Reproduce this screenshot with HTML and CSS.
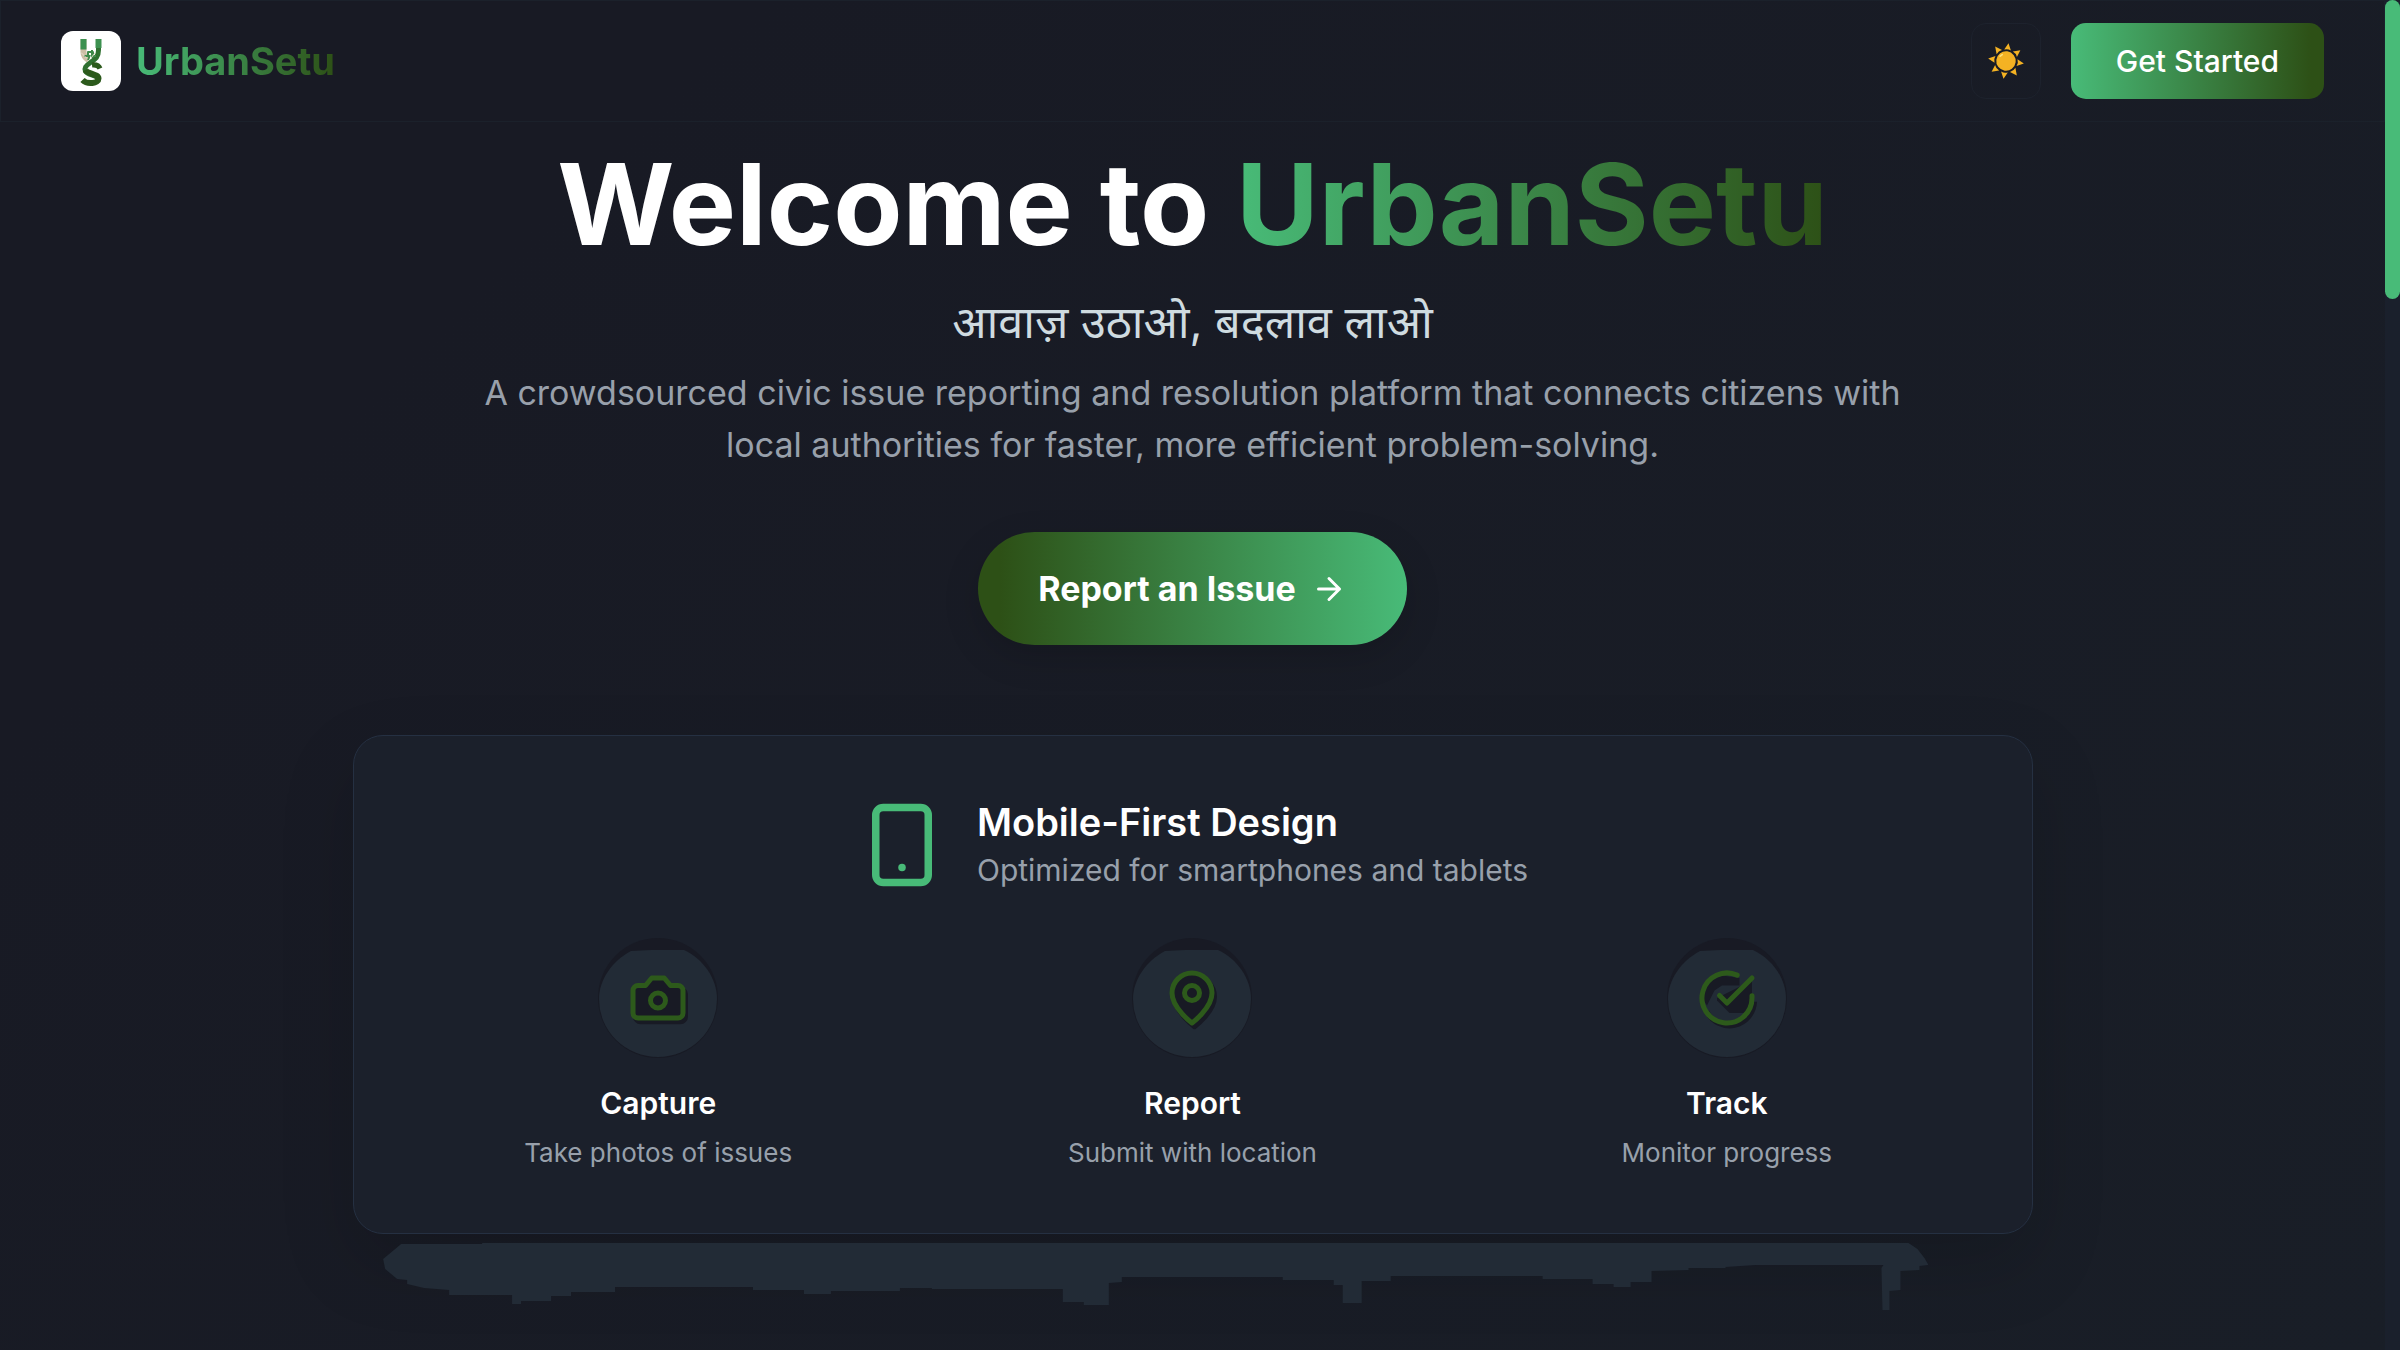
FILE: index.html
```html
<!DOCTYPE html>
<html lang="en">
<head>
<meta charset="utf-8">
<meta name="viewport" content="width=device-width, initial-scale=1">
<title>UrbanSetu</title>
<link rel="stylesheet" href="styles.css">
</head>
<body>
<header class="navbar">
  <a class="brand" href="#">
    <span class="brand-logo">
      <svg viewBox="0 0 60 60" aria-hidden="true">
        <g fill="none" stroke-linejoin="round">
          <path d="M22.500 8v13c0 4 2 6 5 8" stroke="#cdbfa6" stroke-width="6"/>
          <path d="M22.500 8v10.500" stroke="#3d9150" stroke-width="6"/>
          <path d="M37.500 8v11c0 7-3 9-8 12.500c-5 3.500-6.500 5.500-5 9c2 4 12 3 13 8" stroke="#2f7030" stroke-width="5"/>
          <path d="M37.500 8v9" stroke="#3d9150" stroke-width="6"/>
          <path d="M39 37.500c-1-2.500-4-4-8-3.500" stroke="#2c5a1c" stroke-width="5"/>
          <path d="M24.500 39c2 4 13 4 13 8.500c0 5-11 6.500-16 1.500" stroke="#2c5a1c" stroke-width="6"/>
          <path d="M23 25h4v-4h5v4h3M27 29l2-5M31 19v8" stroke="#3f8a4a" stroke-width="2"/>
          <path d="M20 21.500l6 6M34 22l-4 5" stroke="#e9dfd0" stroke-width="1"/>
        </g>
      </svg>
    </span>
    <span class="brand-name">UrbanSetu</span>
  </a>
  <div class="nav-actions">
    <button class="theme-toggle" type="button" aria-label="Toggle theme">
      <svg viewBox="-17 -17 34 34" aria-hidden="true">
        <g fill="#f4b223" transform="rotate(8)">
          <circle r="9.200"/>
          <path id="ray" d="M-3.200-10.500L0-17L3.200-10.500Q0-12 -3.200-10.500Z"/>
          <use href="#ray" transform="rotate(45)"/>
          <use href="#ray" transform="rotate(90)"/>
          <use href="#ray" transform="rotate(135)"/>
          <use href="#ray" transform="rotate(180)"/>
          <use href="#ray" transform="rotate(225)"/>
          <use href="#ray" transform="rotate(270)"/>
          <use href="#ray" transform="rotate(315)"/>
        </g>
        <path d="M-5.500-4.500L-3.500-6" stroke="#ffe27a" stroke-width="1.500" stroke-linecap="round"/>
      </svg>
    </button>
    <button class="get-started" type="button">Get Started</button>
  </div>
</header>

<main class="hero">
  <h1 class="hero-title">Welcome to <span class="hero-accent">UrbanSetu</span></h1>
  <p class="hero-tagline" lang="hi">आवाज़ उठाओ, बदलाव लाओ</p>
  <p class="hero-text">A crowdsourced civic issue reporting and resolution platform that connects citizens with local authorities for faster, more efficient problem-solving.</p>
  <button class="report-button" type="button">
    Report an Issue
    <svg class="stroke-icon" viewBox="0 0 24 24" aria-hidden="true"><path d="M5 12h14M12 5l7 7-7 7"/></svg>
  </button>

  <section class="card">
    <div class="card-head">
      <svg class="stroke-icon phone" viewBox="0 0 24 24" aria-hidden="true"><rect x="5" y="2" width="14" height="20" rx="2"/><path d="M12 18h.01"/></svg>
      <div>
        <h2 class="card-title">Mobile-First Design</h2>
        <p class="card-subtitle">Optimized for smartphones and tablets</p>
      </div>
    </div>
    <div class="steps">
      <div class="step">
        <svg class="step-icon" viewBox="0 0 120 120" aria-hidden="true">
          <circle class="disc-shade" cx="60" cy="60" r="60"/>
          <path class="disc" d="M33 13L53 12H86C105 21 119 40 119 61A59 58 0 0 1 1 61C1 42 14 23 33 13Z"/>
          <g transform="translate(30 30) scale(2.500)">
            <path class="shadow" transform="translate(1 1.500)" d="M14.500 4h-5L7 7H4a2 2 0 0 0-2 2v9a2 2 0 0 0 2 2h16a2 2 0 0 0 2-2V9a2 2 0 0 0-2-2h-3z"/>
            <g class="glyph"><path class="filled" d="M14.500 4h-5L7 7H4a2 2 0 0 0-2 2v9a2 2 0 0 0 2 2h16a2 2 0 0 0 2-2V9a2 2 0 0 0-2-2h-3z"/><circle cx="12" cy="13" r="3"/></g>
          </g>
        </svg>
        <h3 class="step-title">Capture</h3>
        <p class="step-text">Take photos of issues</p>
      </div>
      <div class="step">
        <svg class="step-icon" viewBox="0 0 120 120" aria-hidden="true">
          <circle class="disc-shade" cx="60" cy="60" r="60"/>
          <path class="disc" d="M33 13L53 12H86C105 21 119 40 119 61A59 58 0 0 1 1 61C1 42 14 23 33 13Z"/>
          <g transform="translate(30 30) scale(2.500)">
            <path class="shadow" transform="translate(1 1.500)" d="M20 10c0 6-8 12-8 12s-8-6-8-12a8 8 0 0 1 16 0Z"/>
            <g class="glyph"><path class="filled" d="M20 10c0 6-8 12-8 12s-8-6-8-12a8 8 0 0 1 16 0Z"/><circle cx="12" cy="10" r="3"/></g>
          </g>
        </svg>
        <h3 class="step-title">Report</h3>
        <p class="step-text">Submit with location</p>
      </div>
      <div class="step">
        <svg class="step-icon" viewBox="0 0 120 120" aria-hidden="true">
          <circle class="disc-shade" cx="60" cy="60" r="60"/>
          <path class="disc" d="M33 13L53 12H86C105 21 119 40 119 61A59 58 0 0 1 1 61C1 42 14 23 33 13Z"/>
          <g transform="translate(30 30) scale(2.500)">
            <path class="filled" d="M17 7H10L7 9L5.500 12L4 15L2 12L4 6L10 3L17 4Z"/>
            <path class="filled" d="M8 12L12 10L22 5V15L19 18H13L8 13Z"/>
            <path class="shadow-line" transform="translate(1 1.500)" d="M22 12a10 10 0 0 1-19 4"/>
            <g class="glyph"><path d="M22 11.080V12a10 10 0 1 1-5.930-9.140"/><path d="M9 11l3 3L22 4"/></g>
          </g>
        </svg>
        <h3 class="step-title">Track</h3>
        <p class="step-text">Monitor progress</p>
      </div>
    </div>
  </section>

  <svg class="brush" viewBox="0 0 1546 68" aria-hidden="true">
    <path fill="#222b36" d="M18 1H99V0H1526L1535 6L1542 15L1546 22L1537 23V27L1518 28V47L1507 48V67H1500L1499 25L1501 22H1373L1343 24V25H1306V27L1269 28V39H1248V44H1231V41H1210V36H1160V33H1008V38H979V60H960V42H951V37H900V34H739V39L726 40V62H701V59H680V46H549V45H517V48H448V51H421V47H370V44H232V49H188V53H168V58H138V61H129V52H66V47L41 45L24 41V37L14 36L2 26L0 16Z"/>
  </svg>
</main>
<div class="scroll-track" aria-hidden="true"><div class="scroll-thumb"></div></div>
</body>
</html>
```
FILE: styles.css
```css
* {
  box-sizing: border-box;
  margin: 0;
}

body {
  min-height: 100vh;
  padding-right: 15px;
  font-family: Inter, "Noto Sans", "Noto Sans Devanagari", sans-serif;
  color: #fff;
  background: linear-gradient(135deg, #181a24 20%, #191e27);
}

button {
  border: 0;
  font-family: inherit;
  color: #fff;
  cursor: pointer;
}

.navbar {
  display: flex;
  align-items: center;
  justify-content: space-between;
  padding: 22px 60px;
  border: 1px solid #1b212b;
}

.brand {
  display: flex;
  align-items: center;
  gap: 15px;
  text-decoration: none;
}

.brand-logo {
  display: block;
  width: 60px;
  height: 60px;
  border-radius: 12px;
  background: #fff;
}

.brand-logo svg {
  display: block;
}

.brand-name,
.hero-accent {
  color: transparent;
  background: linear-gradient(90deg, #48bb78, #2d5016);
  background-clip: text;
  -webkit-background-clip: text;
}

.brand-name {
  font-size: 38px;
  font-weight: 700;
  line-height: 48px;
}

.nav-actions {
  display: flex;
  align-items: stretch;
  gap: 30px;
}

.theme-toggle {
  display: flex;
  align-items: center;
  padding: 0 16px;
  border: 1px solid #1d222d;
  border-radius: 15px;
  background: transparent;
}

.theme-toggle svg {
  width: 36px;
  height: 36px;
}

.get-started {
  padding: 15px 45px;
  border-radius: 15px;
  font-size: 30px;
  font-weight: 500;
  line-height: 46px;
  background: linear-gradient(90deg, #48bb78, #2d5016 95%);
}

.hero {
  display: flex;
  flex-direction: column;
  align-items: center;
  max-width: 1680px;
  margin: 0 auto;
  padding-top: 15px;
  text-align: center;
}

.hero-title {
  font-size: 113px;
  font-weight: 700;
  line-height: 134px;
}

.hero-tagline {
  margin-top: 17px;
  font-size: 45px;
  line-height: 68px;
  color: #cfdbe0;
}

.hero-text {
  max-width: 1440px;
  margin-top: 11px;
  font-size: 34px;
  line-height: 52px;
  color: #98a0ab;
}

.report-button {
  display: flex;
  align-items: center;
  gap: 15px;
  margin-top: 61px;
  padding: 30px 60px;
  border-radius: 60px;
  font-size: 34px;
  font-weight: 700;
  line-height: 53px;
  background: linear-gradient(90deg, #2d5016 5%, #48bb78);
  box-shadow: 0 12px 36px rgba(0, 0, 0, 0.15);
}

.stroke-icon {
  width: 36px;
  height: 36px;
  fill: none;
  stroke: currentColor;
  stroke-width: 2;
  stroke-linecap: round;
  stroke-linejoin: round;
}

.card {
  width: 100%;
  margin-top: 90px;
  padding: 60px;
  border: 1px solid #253042;
  border-radius: 30px;
  background: #1b202b;
  box-shadow: 0 30px 75px rgba(0, 0, 0, 0.15);
}

.card-head {
  display: flex;
  align-items: center;
  justify-content: center;
  gap: 30px;
  text-align: left;
}

.phone {
  width: 90px;
  height: 90px;
  color: #48bb78;
}

.card-title {
  font-size: 38px;
  font-weight: 600;
  line-height: 52px;
}

.card-subtitle {
  font-size: 30px;
  line-height: 45px;
  color: #98a0ab;
}

.steps {
  display: grid;
  grid-template-columns: repeat(3, 1fr);
  gap: 45px;
  margin-top: 45px;
}

.step-icon {
  display: block;
  width: 120px;
  height: 120px;
  margin: 0 auto;
}

.disc-shade,
.shadow,
.filled {
  fill: #181a24;
}

.shadow,
.shadow-line {
  stroke: #181a24;
  stroke-width: 2;
  stroke-linejoin: round;
}

.shadow-line {
  fill: none;
}

.disc {
  fill: #222b36;
}

.glyph {
  fill: none;
  stroke: #2d5a1b;
  stroke-width: 2;
  stroke-linecap: round;
  stroke-linejoin: round;
}

.step-title {
  margin-top: 23px;
  font-size: 30px;
  font-weight: 600;
  line-height: 45px;
}

.step-text {
  margin-top: 7px;
  font-size: 26px;
  line-height: 40px;
  color: #98a0ab;
}

.brush {
  align-self: flex-start;
  width: 92%;
  margin: 9px 0 0 30px;
}

.scroll-track {
  position: fixed;
  top: 0;
  right: 0;
  bottom: 0;
  width: 15px;
  background: #1a202c;
}

.scroll-thumb {
  height: 299px;
  border-radius: 8px;
  background: #48bb78;
}
```
